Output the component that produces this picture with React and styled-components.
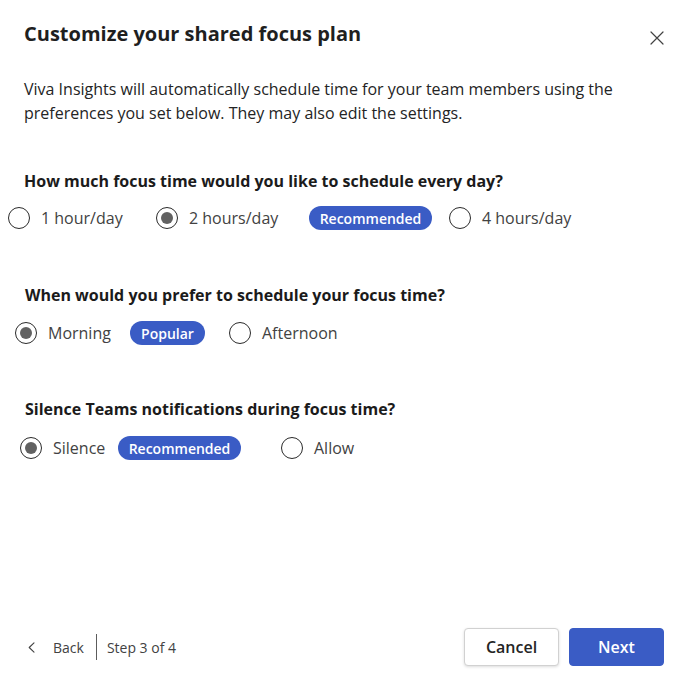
import React from 'react'
import styled, { createGlobalStyle } from 'styled-components';

const GlobalStyle = createGlobalStyle`
    html, body {
        margin: 0;
        padding: 0;
        background: #ffffff;
    }
    body {
        font-family: "Open Sans", "Noto Sans", sans-serif;
        color: #242424;
    }
`;

const Dialog = styled.div`
    box-sizing: border-box;
    width: 689px;
    height: 694px;
    display: flex;
    flex-direction: column;
    padding: 20px 25px 28px 24px;
`;

const Header = styled.div`
    display: flex;
    align-items: center;
    justify-content: space-between;
    height: 28px;
`;

const Title = styled.h1`
    margin: 0;
    font-size: 20px;
    line-height: 28px;
    font-weight: 700;
    color: #1f1f1f;
`;

const CloseButton = styled.button`
    border: none;
    background: none;
    padding: 0;
    margin-right: -1px;
    margin-top: 8px;
    width: 16px;
    height: 16px;
    display: flex;
    align-items: center;
    justify-content: center;
    color: #424242;
    cursor: pointer;
`;

const Description = styled.p`
    margin: 29px 0 0;
    font-size: 16px;
    line-height: 24px;
    color: #242424;
`;

const Question = styled.h2`
    margin: ${p => p.$top}px 0 0 ${p => p.$indent}px;
    font-size: 16px;
    line-height: 22px;
    font-weight: 700;
    color: #1b1b1b;
`;

const OptionRow = styled.div`
    display: grid;
    grid-template-columns: ${p => p.$cols};
    align-items: center;
    height: 32px;
    margin-top: ${p => p.$top ?? 10}px;
    margin-left: ${p => p.$indent}px;
`;

const Option = styled.label`
    display: flex;
    align-items: center;
    gap: 11px;
    font-size: 16px;
    line-height: 22px;
    color: #424242;
    cursor: pointer;
    white-space: nowrap;
`;

const Circle = styled.span`
    box-sizing: border-box;
    width: 22px;
    height: 22px;
    border-radius: 50%;
    border: 1.5px solid #2b2b2b;
    display: flex;
    align-items: center;
    justify-content: center;
    flex-shrink: 0;

    &::after {
        content: "";
        width: 12px;
        height: 12px;
        border-radius: 50%;
        background: #616161;
        display: ${p => (p.$checked ? 'block' : 'none')};
    }
`;

const Badge = styled.span`
    justify-self: start;
    box-sizing: border-box;
    width: ${p => p.$w}px;
    height: 24px;
    border-radius: 12px;
    background: #3a5cc5;
    color: #ffffff;
    font-size: 14px;
    font-weight: 600;
    display: flex;
    align-items: center;
    justify-content: center;
    white-space: nowrap;
`;

const Footer = styled.div`
    margin-top: auto;
    display: flex;
    align-items: center;
    justify-content: space-between;
`;

const StepNav = styled.div`
    display: flex;
    align-items: center;
    font-size: 14px;
    color: #424242;
`;

const BackLink = styled.button`
    display: flex;
    align-items: center;
    gap: 18px;
    border: none;
    background: none;
    padding: 0 0 0 4px;
    font: inherit;
    color: inherit;
    cursor: pointer;
`;

const Divider = styled.span`
    width: 1px;
    height: 26px;
    background: #5c5c5c;
    margin: 0 10px 0 12px;
`;

const Actions = styled.div`
    display: flex;
    gap: 10px;
`;

const Button = styled.button`
    box-sizing: border-box;
    width: 95px;
    height: 38px;
    border-radius: 4px;
    font-family: inherit;
    font-size: 16px;
    font-weight: 600;
    cursor: pointer;
    border: 1px solid ${p => (p.$primary ? '#3a5cc5' : '#d1d1d1')};
    background: ${p => (p.$primary ? '#3a5cc5' : '#ffffff')};
    color: ${p => (p.$primary ? '#ffffff' : '#242424')};
    box-shadow: ${p => (p.$primary ? 'none' : '0 1px 3px rgba(0, 0, 0, 0.14)')};
`;

const Radio = ({ checked, children }) => (
    <Option>
        <Circle $checked={checked} />
        {children}
    </Option>
);

const CloseIcon = () => (
    <svg width="14" height="14" viewBox="0 0 14 14" fill="none">
        <path d="M1 1L13 13M13 1L1 13" stroke="currentColor" strokeWidth="1.2" strokeLinecap="round" />
    </svg>
);

const ChevronLeft = () => (
    <svg width="7" height="11" viewBox="0 0 7 11" fill="none">
        <path d="M6 0.8L1.2 5.5L6 10.2" stroke="#424242" strokeWidth="1.1" strokeLinecap="round" strokeLinejoin="round" />
    </svg>
);

export default function App() {
    return (
        <>
            <GlobalStyle />
            <Dialog>
                <Header>
                    <Title>Customize your shared focus plan</Title>
                    <CloseButton aria-label="Close"><CloseIcon /></CloseButton>
                </Header>

                <Description>
                    Viva Insights will automatically schedule time for your team members using the
                    preferences you set below. They may also edit the settings.
                </Description>

                <Question $top={45} $indent={0}>How much focus time would you like to schedule every day?</Question>
                <OptionRow $indent={-16} $cols="148px 153px 140px auto">
                    <Radio>1 hour/day</Radio>
                    <Radio checked>2 hours/day</Radio>
                    <Badge $w={123}>Recommended</Badge>
                    <Radio>4 hours/day</Radio>
                </OptionRow>

                <Question $top={50} $indent={1}>When would you prefer to schedule your focus time?</Question>
                <OptionRow $indent={-9} $top={11} $cols="115px 99px auto">
                    <Radio checked>Morning</Radio>
                    <Badge $w={75}>Popular</Badge>
                    <Radio>Afternoon</Radio>
                </OptionRow>

                <Question $top={49} $indent={1}>Silence Teams notifications during focus time?</Question>
                <OptionRow $indent={-4} $top={12} $cols="98px 163px auto">
                    <Radio checked>Silence</Radio>
                    <Badge $w={123}>Recommended</Badge>
                    <Radio>Allow</Radio>
                </OptionRow>

                <Footer>
                    <StepNav>
                        <BackLink><ChevronLeft />Back</BackLink>
                        <Divider />
                        <span>Step 3 of 4</span>
                    </StepNav>
                    <Actions>
                        <Button>Cancel</Button>
                        <Button $primary>Next</Button>
                    </Actions>
                </Footer>
            </Dialog>
        </>
    );
}
